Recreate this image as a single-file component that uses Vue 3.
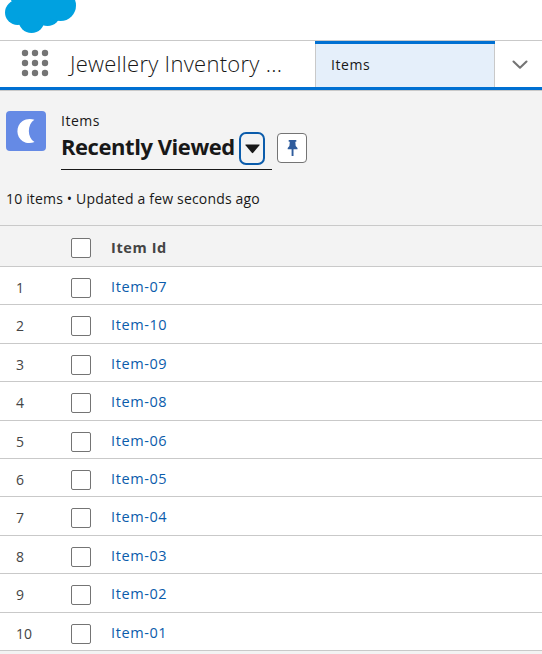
<script setup>
import { ref } from 'vue'

const items = ref(['07', '10', '09', '08', '06', '05', '04', '03', '02', '01'].map((n) => `Item-${n}`))
</script>

<template>
  <div class="page">
    <header class="brand">
      <svg class="cloud" width="80" height="34" viewBox="0 0 80 34">
        <g fill="#00a1e0">
          <circle cx="17.500" cy="12.500" r="12.500" />
          <circle cx="31.500" cy="20" r="13" />
          <circle cx="47.500" cy="13" r="13" />
          <circle cx="60.500" cy="5.500" r="15.500" />
          <path d="M11 0H70V12L48 20H20Z" />
        </g>
      </svg>
    </header>
    <nav class="nav">
      <svg class="waffle" width="28" height="28" viewBox="0 0 28 28" fill="#747474">
        <template v-for="r in 3" :key="r">
          <circle v-for="c in 3" :key="c" :cx="c * 10 - 6" :cy="r * 10 - 6" r="3.200" />
        </template>
      </svg>
      <span class="app-name">Jewellery Inventory ...</span>
      <a class="tab">Items</a>
      <span class="more">
        <svg width="16" height="10" viewBox="0 0 16 10">
          <path d="M1.500 1.500L8 7.700L14.500 1.500" fill="none" stroke="#747474" stroke-width="2.100" stroke-linecap="round" stroke-linejoin="round" />
        </svg>
      </span>
    </nav>
    <section class="list-head">
      <div class="head-row">
        <svg class="object-icon" width="40" height="40" viewBox="0 0 40 40">
          <rect width="40" height="40" rx="4" fill="#658ae5" />
          <path d="M28.400 8.800C24.800 7.300 20 7.600 16.300 10.300C9.600 15.300 9.900 25.900 16.700 30.200C20.400 32.600 25 32.600 28.500 31C21 26.500 21 13.500 28.400 8.800Z" fill="#fff" />
        </svg>
        <div class="heading">
          <div class="object-name">Items</div>
          <div class="view">
            <h1>Recently Viewed</h1>
            <button class="picker" aria-label="Select list view">
              <svg width="15" height="10" viewBox="0 0 15 10"><path d="M.8 .5H14.200Q15 .5 14.500 1.200L8.200 8.800Q7.500 9.600 6.800 8.800L.5 1.200Q0 .5 .8 .5Z" fill="#181818" /></svg>
            </button>
          </div>
        </div>
        <button class="pin" aria-label="Pin list view">
          <svg width="12" height="18" viewBox="0 0 12 18" fill="#2f5c9c">
            <path d="M1.700 1H9.300V2.700H8.300L8.700 7L10.500 9V10.300H6.500V17H4.600V10.300H.7V9L2.400 7L2.800 2.700H1.700Z" />
          </svg>
        </button>
      </div>
      <p class="status">10 items • Updated a few seconds ago</p>
    </section>
    <div class="grid">
      <div class="row columns">
        <span class="number"></span>
        <span class="check"></span>
        <span class="title">Item Id</span>
      </div>
      <div v-for="(item, i) in items" :key="item" class="row">
        <span class="number">{{ i + 1 }}</span>
        <span class="check"></span>
        <a class="link">{{ item }}</a>
      </div>
    </div>
  </div>
</template>

<style>
body {
  background: #f3f3f3;
  overflow: hidden;
}
</style>

<style scoped>
.page {
  height: 654px;
  overflow: hidden;
  background: #f3f3f3;
  font-family: "Open Sans", "Noto Sans", sans-serif;
  font-size: 14px;
  color: #181818;
}
.page * {
  box-sizing: border-box;
}
.brand {
  height: 41px;
  background: #fff;
  border-bottom: 1px solid #c9c9c9;
}
.cloud {
  display: block;
}
.nav {
  display: flex;
  height: 50px;
  background: #fff;
  border-bottom: 1px solid #c9c9c9;
  box-shadow: inset 0 -3px 0 #0070d2;
  padding-bottom: 3px;
}
.waffle {
  flex: none;
  margin: 8px 0 0 21px;
}
.app-name {
  width: 266px;
  padding-left: 21px;
  font-size: 22px;
  font-weight: 350;
  letter-spacing: 0.270px;
  line-height: 45px;
  white-space: nowrap;
}
.tab {
  width: 180px;
  padding-left: 16px;
  background:
    linear-gradient(#0070d2, #0070d2) top / 100% 3px no-repeat,
    linear-gradient(#c9c9c9, #c9c9c9) left / 1px 100% no-repeat,
    linear-gradient(#c9c9c9, #c9c9c9) right / 1px 100% no-repeat,
    #e5effa;
  line-height: 47px;
  letter-spacing: 0.600px;
}
.more {
  flex: 1;
  display: flex;
  align-items: center;
  padding: 1px 0 0 17px;
}
.list-head {
  height: 134px;
  padding: 20px 6px 0;
}
.head-row {
  display: flex;
}
.object-icon {
  flex: none;
}
.heading {
  width: 211px;
  height: 59px;
  margin-left: 15px;
  border-bottom: 1px solid #181818;
}
.object-name {
  height: 20px;
  line-height: 20px;
  letter-spacing: 0.500px;
}
.view {
  display: flex;
}
h1 {
  width: 178px;
  margin: 0;
  font-size: 22px;
  line-height: 31px;
  font-weight: 700;
  letter-spacing: -0.450px;
  white-space: nowrap;
}
button {
  display: flex;
  align-items: center;
  justify-content: center;
  padding: 0;
  background: #fff;
}
.picker {
  width: 26px;
  height: 33px;
  margin-top: 1px;
  border: 2px solid #0b5cab;
  border-radius: 7px;
  background: #f3f3f3;
}
.pin {
  width: 30px;
  height: 30px;
  margin: 22px 0 0 5px;
  border: 1px solid #747474;
  border-radius: 4px;
}
.pin svg {
  position: relative;
  left: 1px;
}
.status {
  margin: 19px 0 0;
  line-height: 20px;
  letter-spacing: 0.170px;
  white-space: nowrap;
}
.grid {
  background: #fff;
}
.row {
  display: grid;
  grid-template-columns: 71px 40px 1fr;
  height: 38.400px;
  border-bottom: 1px solid #c9c9c9;
}
.columns {
  height: 42px;
  border-top: 1px solid #c9c9c9;
  background: #f3f3f3;
}
.number {
  padding: 11px 0 0 16px;
  line-height: 20px;
  color: #444;
}
.check {
  width: 20px;
  height: 20px;
  margin-top: 11px;
  background: #fff;
  border: 1px solid #747474;
  border-radius: 2px;
}
.columns .check {
  margin-top: 12px;
}
.title {
  line-height: 43px;
  font-size: 14.500px;
  font-weight: 700;
  letter-spacing: 0.600px;
  color: #444;
}
.link {
  padding-top: 10px;
  font-size: 14.500px;
  line-height: 20px;
  letter-spacing: 0.600px;
  color: #0b5cab;
}
</style>
